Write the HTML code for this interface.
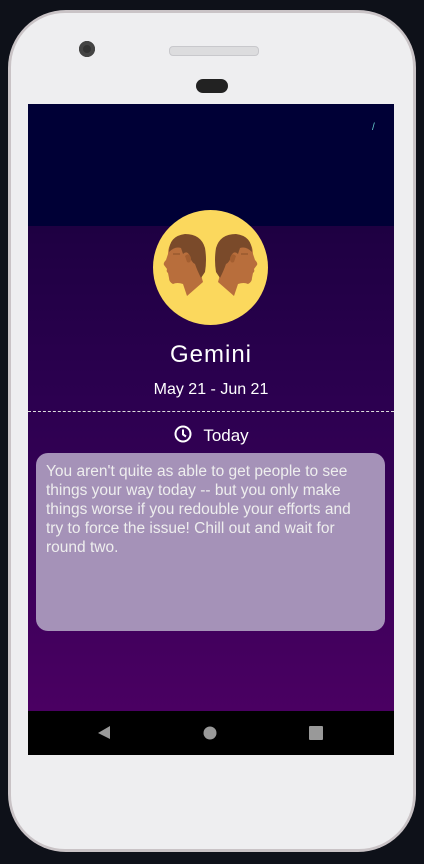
<!DOCTYPE html>
<html><head><style>
body{margin:0;width:424px;height:864px;background:#0e1119;position:relative;overflow:hidden;font-family:"Liberation Sans",sans-serif}
.phone{position:absolute;left:8px;top:10px;width:408px;height:842px;border-radius:58px;background:#c9c3c6}
.inner{position:absolute;left:11px;top:13px;width:402px;height:836px;border-radius:54px;background:#eeeef0}
.cam{position:absolute;left:79px;top:41px;width:16px;height:16px;border-radius:50%;background:#333;box-shadow:inset 0 0 0 4px #444}
.spk{position:absolute;left:169px;top:46px;width:88px;height:8px;border-radius:4px;background:#dcdcde;border:1px solid #c8c8cc}
.sens{position:absolute;left:196px;top:79px;width:32px;height:14px;border-radius:7px;background:#222}
.screen{position:absolute;left:28px;top:104px;width:366px;height:651px;overflow:hidden;background:linear-gradient(#1e0042 122px,#2c0050 300px,#4a0062 607px)}
.hdr{position:absolute;left:0;top:0;width:366px;height:122px;background:#000036}
.nav{position:absolute;left:0;top:607px;width:366px;height:44px;background:#000}
.logo{position:absolute;left:125px;top:106px;width:115px;height:115px;border-radius:50%;background:#fbd85d}
.t{position:absolute;left:0;width:366px;text-align:center;color:#fff}
.dash{position:absolute;left:0;top:307px;width:366px;border-top:1px dashed #ddd}
.card{position:absolute;left:8px;top:349px;width:349px;height:178px;border-radius:12px;background:#a592b8;color:#eee;font-size:15.5px;line-height:19px;padding:9px 10px;box-sizing:border-box;white-space:nowrap}
</style></head><body>
<div class="phone"></div><div class="inner"></div>
<div class="cam"></div><div class="spk"></div><div class="sens"></div>
<div class="screen">
<div class="hdr"></div>
<div style="position:absolute;left:344px;top:18px;color:#6cc;font-size:10px">/</div>
<div class="logo"><svg width="115" height="115" viewBox="0 0 115 115">
<defs><g id="h">
<path d="M34 86 L30 74 Q24 72 20 74 Q16 72 16 68 L15 63 Q13 62 14 59 L11 55 Q10 53 13 50 L15 44 Q15 36 20 31 L44 34 L46 58 L50 72 Z" fill="#b86e3c"/>
<path d="M16 42 Q16 26 32 24 Q48 24 52 38 Q54 50 52 62 L48 68 Q44 60 42 54 Q38 52 37 46 Q34 40 30 44 L28 38 Q22 36 16 42 Z" fill="#7a4a2a"/>
<path d="M32 46 Q36 42 38 48 Q38 54 34 52Z" fill="#a35e30"/>
<path d="M20 44 L27 44" stroke="#8a5028" stroke-width="1"/>
</g></defs>
<use href="#h"/>
<use href="#h" transform="translate(115,0) scale(-1,1)"/>
</svg></div>
<div class="t" style="top:237px;font-size:24px;letter-spacing:1px">Gemini</div>
<div class="t" style="top:277px;font-size:16px">May 21 - Jun 21</div>
<div class="dash"></div>
<div class="t" style="top:320px;font-size:17px"><svg width="20" height="20" viewBox="0 0 20 20" style="vertical-align:-3px;margin-right:10px"><circle cx="10" cy="10" r="7.5" fill="none" stroke="#fff" stroke-width="2"/><path d="M10 5.5V10.5L13 12.5" fill="none" stroke="#fff" stroke-width="2"/></svg>Today</div>
<div class="card">You aren't quite as able to get people to see<br>things your way today -- but you only make<br>things worse if you redouble your efforts and<br>try to force the issue! Chill out and wait for<br>round two.</div>
<div class="nav">
<svg width="366" height="44"><path d="M70 22 L82 15 L82 28Z" fill="#999"/><circle cx="182" cy="22" r="6.5" fill="#999"/><rect x="281" y="15" width="14" height="14" rx="1" fill="#999"/></svg>
</div>
</div>
</body></html>
